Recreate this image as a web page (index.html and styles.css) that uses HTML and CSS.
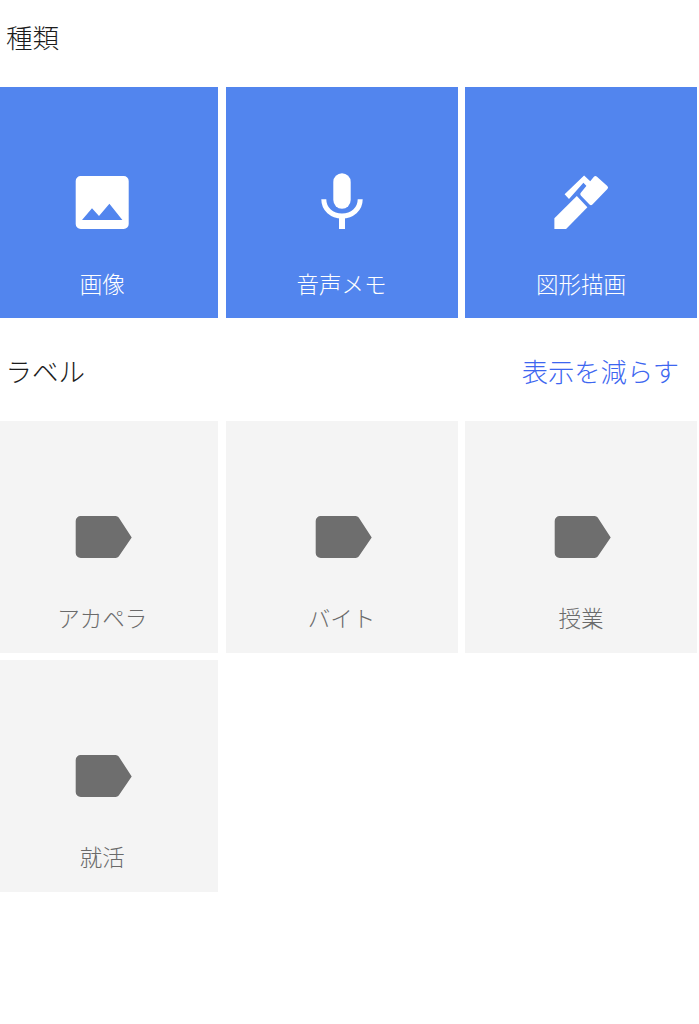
FILE: index.html
```html
<!DOCTYPE html>
<html lang="ja">
<head>
    <meta charset="UTF-8">
    <meta name="viewport" content="width=device-width, initial-scale=1.0">
    <title>種類</title>
    <link rel="stylesheet" href="styles.css">
</head>
<body>

    <!-- Types -->
    <div class="section-head">
        <h2 class="section-title">種類</h2>
    </div>
    <div class="tile-grid">
        <div class="tile tile-blue">
            <svg class="tile-icon" viewBox="0 0 64 64">
                <path fill="#fff" fill-rule="evenodd" d="M10.700 5h43a5 5 0 0 1 5 5v43a5 5 0 0 1-5 5h-43a5 5 0 0 1-5-5v-43a5 5 0 0 1 5-5zM12 49l10-11.700 7 7.700 10.400-12.300 13 16.300z"/>
            </svg>
            <span class="tile-label">画像</span>
        </div>
        <div class="tile tile-blue">
            <svg class="tile-icon" viewBox="0 0 64 64">
                <rect x="23.300" y="2.300" width="17.400" height="35.400" rx="8.700" fill="#fff"/>
                <path d="M13.800 28.300c0 10 8 16.700 18.200 16.700s18.200-6.700 18.200-16.700" fill="none" stroke="#fff" stroke-width="5"/>
                <rect x="29" y="44" width="6" height="14" fill="#fff"/>
            </svg>
            <span class="tile-label">音声メモ</span>
        </div>
        <div class="tile tile-blue">
            <svg class="tile-icon" viewBox="0 0 64 64">
                <path fill="#fff" d="M5.400 47.300l22.400-22.300 10.600 11.300-21.300 21.700h-11.700z"/>
                <path fill="#fff" d="M44.900 5.800a2 2 0 0 1 2.800-.2l10.600 9.500a2 2 0 0 1 .1 2.900l-15 15.500a2 2 0 0 1-2.900 0l-8.700-9a2 2 0 0 1 0-2.700z"/>
                <path fill="#fff" d="M15.600 23.300l19.500-18.800 7.200 6.800-4.500 3.900-3.400-3.400-14.400 16.200z"/>
            </svg>
            <span class="tile-label">図形描画</span>
        </div>
    </div>

    <!-- Labels -->
    <div class="section-head section-head-labels">
        <h2 class="section-title">ラベル</h2>
        <a class="section-link">表示を減らす</a>
    </div>
    <div class="tile-grid">
        <div class="tile tile-grey">
            <svg class="tile-icon" viewBox="0 0 64 64"><path class="tag" d="M10.700 11h35a4 4 0 0 1 3 1.500l13 20-13 19a4 4 0 0 1-3 1.500h-35a5 5 0 0 1-5-5v-32a5 5 0 0 1 5-5z"/></svg>
            <span class="tile-label">アカペラ</span>
        </div>
        <div class="tile tile-grey">
            <svg class="tile-icon" viewBox="0 0 64 64"><path class="tag" d="M10.700 11h35a4 4 0 0 1 3 1.500l13 20-13 19a4 4 0 0 1-3 1.500h-35a5 5 0 0 1-5-5v-32a5 5 0 0 1 5-5z"/></svg>
            <span class="tile-label">バイト</span>
        </div>
        <div class="tile tile-grey">
            <svg class="tile-icon" viewBox="0 0 64 64"><path class="tag" d="M10.700 11h35a4 4 0 0 1 3 1.500l13 20-13 19a4 4 0 0 1-3 1.500h-35a5 5 0 0 1-5-5v-32a5 5 0 0 1 5-5z"/></svg>
            <span class="tile-label">授業</span>
        </div>
        <div class="tile tile-grey">
            <svg class="tile-icon" viewBox="0 0 64 64"><path class="tag" d="M10.700 11h35a4 4 0 0 1 3 1.500l13 20-13 19a4 4 0 0 1-3 1.500h-35a5 5 0 0 1-5-5v-32a5 5 0 0 1 5-5z"/></svg>
            <span class="tile-label">就活</span>
        </div>
    </div>

</body>
</html>
```

FILE: styles.css
```css
html, body { height: 100%; overflow: hidden; }
body { margin: 0; background: #fff; font-family: "Noto Sans CJK JP", "Noto Sans", sans-serif; color: #1c1c1c; }
.section-head { height: 87px; padding: 0 20px 13px 6px; box-sizing: border-box; display: flex; align-items: center; justify-content: space-between; }
.section-head-labels { height: 102.9px; padding: 2px 20px 0 5.5px; }
.section-title { margin: 0; font-size: 26.5px; font-weight: 300; line-height: 36px; }
.section-link { font-size: 26.3px; font-weight: 300; line-height: 36px; color: #3d66f0; }
.tile-grid { display: grid; grid-template-columns: repeat(3, 232px); gap: 7.5px 7.3px; margin-left: -13.7px; width: 720px; }
.tile { height: 231.4px; box-sizing: border-box; padding-top: 84px; display: flex; flex-direction: column; align-items: center; }
.tile-blue { background: #5285ee; color: #fff; }
.tile-grey { background: #f4f4f4; color: #6a6a6a; }
.tile-icon { width: 64px; height: 64px; flex: none; }
.tag { fill: #6e6e6e; }
.tile-label { margin-top: 31px; font-size: 22.5px; font-weight: 300; line-height: 34px; white-space: nowrap; }
```
